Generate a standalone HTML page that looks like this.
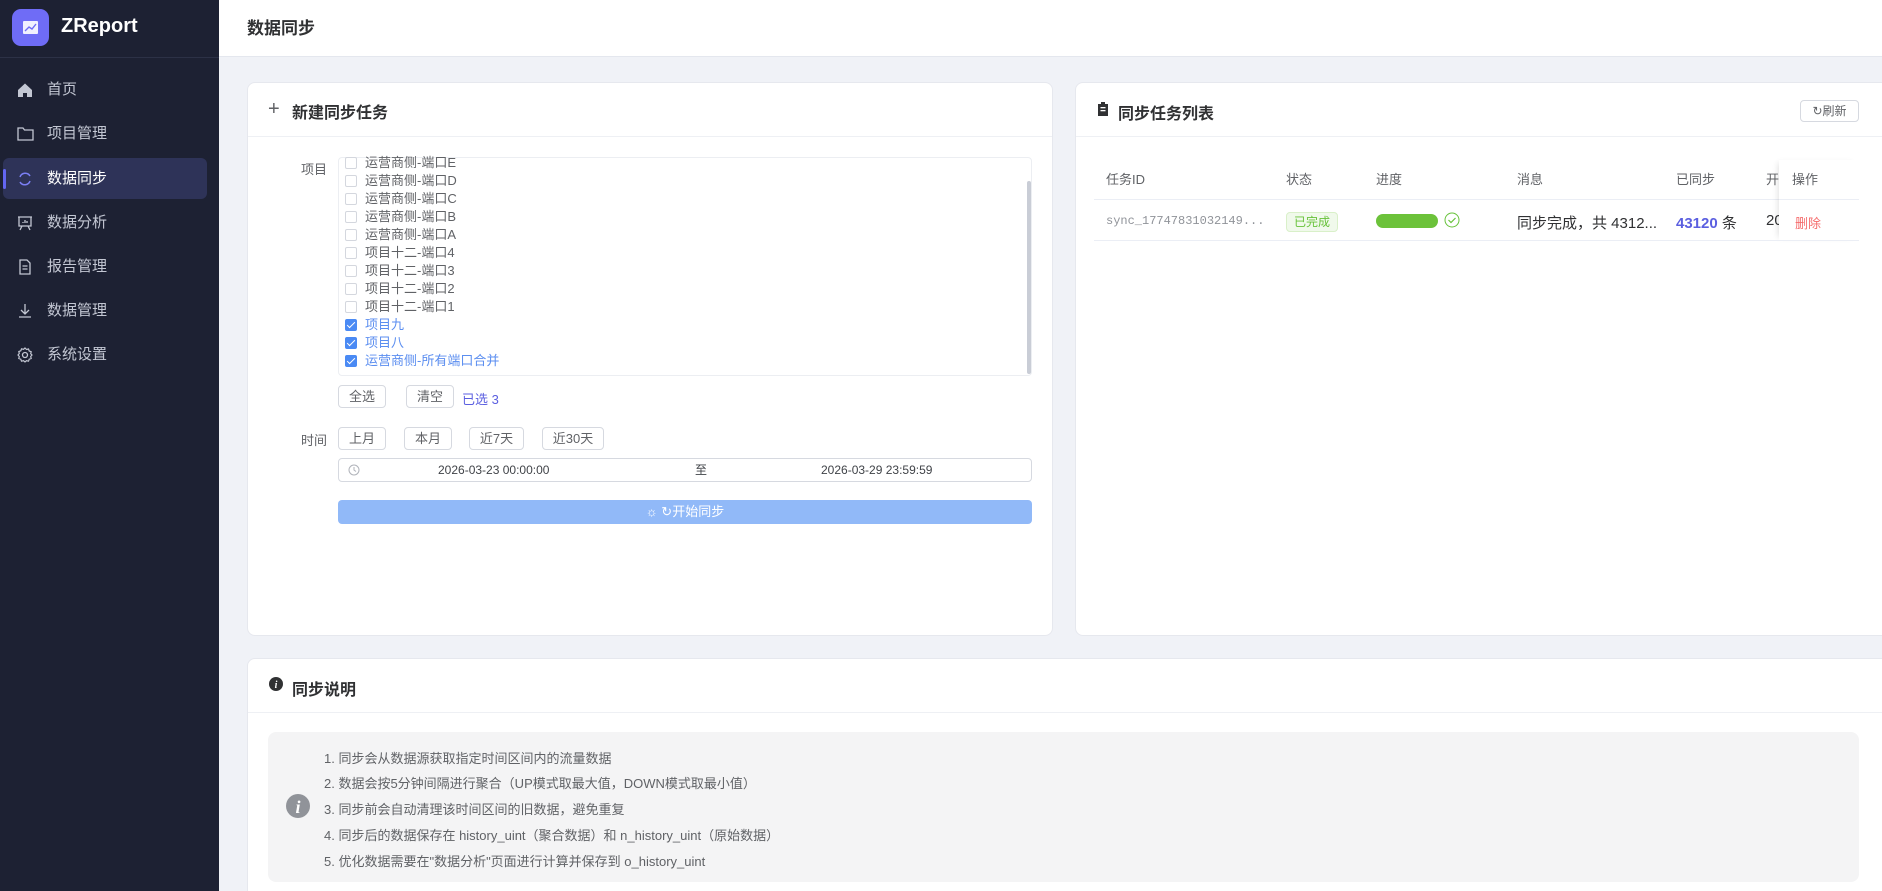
<!DOCTYPE html>
<html><head><meta charset="utf-8">
<style>
*{box-sizing:border-box;margin:0;padding:0}
html{width:1882px;height:891px;overflow:hidden}
body{width:1882px;height:891px;overflow:hidden;background:#f0f2f7;font-family:"Liberation Sans","Noto Sans CJK SC",sans-serif;color:#303133;position:relative}
.abs{position:absolute}
.side{left:0;top:0;width:219px;height:891px;background:#1d2133}
.logo{left:12px;top:9px;width:37px;height:37px;border-radius:9px;background:#6f6cf6}
.brand{left:61px;top:15px;color:#fff;font-weight:bold;font-size:20px}
.sep{left:0;top:57px;width:219px;height:1px;background:#2c3146}
.nav{left:0;width:219px;height:40px;color:#c3c7d3;font-size:15px;line-height:40px}
.nav span.t{position:absolute;left:47px}
.nav svg{position:absolute;left:17px;top:12px}
.active{left:3px;top:158px;width:204px;height:41px;background:#2e3358;border-radius:6px}
.abar{left:3px;top:169px;width:3px;height:20px;background:#6366f1;border-radius:2px}
.header{left:219px;top:0;width:1663px;height:57px;background:#fff;border-bottom:1px solid #e4e7ee}
.card{background:#fff;border:1px solid #e6e8ee;border-radius:8px}
.ch{font-size:16px;font-weight:bold;color:#303133}
.hl{height:1px;background:#eef0f4}
.item{left:345px;font-size:13px;color:#606266;height:18px;line-height:18px}
.item i{display:inline-block;width:12px;height:12px;border:1px solid #d4d7de;border-radius:2px;vertical-align:-2px;margin-right:8px;background:#fff}
.item.on{color:#5b8ef0}
.item.on i{background:#4a8af4;border-color:#4a8af4;position:relative}
.item.on i:after{content:"";position:absolute;left:3px;top:0px;width:3px;height:7px;border:solid #fff;border-width:0 1.5px 1.5px 0;transform:rotate(45deg)}
.btn{border:1px solid #d6d9e0;border-radius:4px;font-size:13px;color:#606266;text-align:center;background:#fff}
.th{top:169px;font-size:13px;color:#606266}
.info{font-size:13px;color:#606266}
</style></head><body>
<div class="abs side"></div>
<div class="abs logo"><svg width="37" height="37" viewBox="0 0 37 37"><rect x="11" y="12" width="15" height="13" rx="1" fill="#fff" opacity=".9"/><path d="M13 22l4-4 3 2 4-5" stroke="#6f6cf6" stroke-width="1.4" fill="none"/></svg></div>
<div class="abs brand">ZReport</div>
<div class="abs sep"></div>
<div class="abs active"></div><div class="abs abar"></div>
<div class="abs nav" style="top:70px"><svg width="16" height="16" viewBox="0 0 16 16"><path d="M1 8L8 1.5 15 8v7H10v-4H6v4H1z" fill="#c3c7d3"/></svg><span class="t">首页</span></div>
<div class="abs nav" style="top:114px"><svg width="17" height="16" viewBox="0 0 17 16"><path d="M1 2h5l1.5 2H16v10H1z" stroke="#c3c7d3" stroke-width="1.3" fill="none"/></svg><span class="t">项目管理</span></div>
<div class="abs nav" style="top:159px;color:#fff"><svg width="16" height="16" viewBox="0 0 16 16"><path d="M3 6a5.5 5.5 0 0 1 10-1M13 10a5.5 5.5 0 0 1-10 1" stroke="#7b7ff5" stroke-width="1.5" fill="none"/></svg><span class="t">数据同步</span></div>
<div class="abs nav" style="top:203px"><svg width="16" height="16" viewBox="0 0 16 16"><path d="M1 2h14M2 2v9h12V2M5 11l-2 4M11 11l2 4M6 8v-1M8 8V5M10 8V6" stroke="#c3c7d3" stroke-width="1.3" fill="none"/></svg><span class="t">数据分析</span></div>
<div class="abs nav" style="top:247px"><svg width="16" height="16" viewBox="0 0 16 16"><path d="M3 1h7l3 3v11H3zM5.5 7h5M5.5 10h5" stroke="#c3c7d3" stroke-width="1.3" fill="none"/></svg><span class="t">报告管理</span></div>
<div class="abs nav" style="top:291px"><svg width="16" height="16" viewBox="0 0 16 16"><path d="M8 1v10M4 7l4 4 4-4M2 14h12" stroke="#c3c7d3" stroke-width="1.3" fill="none"/></svg><span class="t">数据管理</span></div>
<div class="abs nav" style="top:335px"><svg width="16" height="16" viewBox="0 0 16 16"><circle cx="8" cy="8" r="2.5" stroke="#c3c7d3" stroke-width="1.3" fill="none"/><path d="M8 1l1.5 1.5 2-.5.7 2 2 .7-.5 2L15 8l-1.3 1.5.5 2-2 .7-.7 2-2-.5L8 15l-1.5-1.3-2 .5-.7-2-2-.7.5-2L1 8l1.3-1.5-.5-2 2-.7.7-2 2 .5z" stroke="#c3c7d3" stroke-width="1.2" fill="none"/></svg><span class="t">系统设置</span></div>

<div class="abs header"></div>
<div class="abs" style="left:247px;top:14px;font-size:17px;font-weight:bold;color:#303133">数据同步</div>

<!-- left card -->
<div class="abs card" style="left:247px;top:82px;width:806px;height:554px"></div>
<div class="abs" style="left:268px;top:98px;font-size:20px;color:#606266;font-weight:300">+</div>
<div class="abs ch" style="left:292px;top:99px">新建同步任务</div>
<div class="abs hl" style="left:248px;top:136px;width:804px"></div>
<div class="abs" style="left:301px;top:159px;font-size:13px;color:#606266">项目</div>
<div class="abs" style="left:338px;top:157px;width:694px;height:219px;border:1px solid #eceef2;border-radius:4px"></div>
<div class="abs" style="left:1027px;top:181px;width:4px;height:193px;background:#c9cdd6;border-radius:2px"></div>
<div class="abs item" style="top:154px"><i></i>运营商侧-端口E</div>
<div class="abs item" style="top:172px"><i></i>运营商侧-端口D</div>
<div class="abs item" style="top:190px"><i></i>运营商侧-端口C</div>
<div class="abs item" style="top:208px"><i></i>运营商侧-端口B</div>
<div class="abs item" style="top:226px"><i></i>运营商侧-端口A</div>
<div class="abs item" style="top:244px"><i></i>项目十二-端口4</div>
<div class="abs item" style="top:262px"><i></i>项目十二-端口3</div>
<div class="abs item" style="top:280px"><i></i>项目十二-端口2</div>
<div class="abs item" style="top:298px"><i></i>项目十二-端口1</div>
<div class="abs item on" style="top:316px"><i></i>项目九</div>
<div class="abs item on" style="top:334px"><i></i>项目八</div>
<div class="abs item on" style="top:352px"><i></i>运营商侧-所有端口合并</div>
<div class="abs btn" style="left:338px;top:385px;width:48px;height:23px;line-height:21px">全选</div>
<div class="abs btn" style="left:406px;top:385px;width:48px;height:23px;line-height:21px">清空</div>
<div class="abs" style="left:462px;top:389px;font-size:13px;color:#5b5fe0">已选 3</div>
<div class="abs" style="left:301px;top:430px;font-size:13px;color:#606266">时间</div>
<div class="abs btn" style="left:338px;top:427px;width:48px;height:23px;line-height:21px">上月</div>
<div class="abs btn" style="left:404px;top:427px;width:48px;height:23px;line-height:21px">本月</div>
<div class="abs btn" style="left:469px;top:427px;width:55px;height:23px;line-height:21px">近7天</div>
<div class="abs btn" style="left:542px;top:427px;width:62px;height:23px;line-height:21px">近30天</div>
<div class="abs" style="left:338px;top:458px;width:694px;height:24px;border:1px solid #d6d9e0;border-radius:4px"></div>
<svg class="abs" style="left:348px;top:464px" width="12" height="12" viewBox="0 0 12 12"><circle cx="6" cy="6" r="5" stroke="#b0b3ba" fill="none"/><path d="M6 3v3l2 1.5" stroke="#b0b3ba" fill="none"/></svg>
<div class="abs" style="left:438px;top:463px;font-size:12px;color:#404348">2026-03-23 00:00:00</div>
<div class="abs" style="left:695px;top:461px;font-size:12px;color:#404348">至</div>
<div class="abs" style="left:821px;top:463px;font-size:12px;color:#404348">2026-03-29 23:59:59</div>
<div class="abs" style="left:338px;top:500px;width:694px;height:24px;background:#91b9f8;border-radius:4px;color:#fff;font-size:13px;text-align:center;line-height:24px">☼ ↻开始同步</div>

<!-- right card -->
<div class="abs card" style="left:1075px;top:82px;width:820px;height:554px"></div>
<svg class="abs" style="left:1097px;top:102px" width="12" height="14" viewBox="0 0 12 14"><path d="M1 2h10v12H1z" fill="#303133"/><rect x="3.5" y="5" width="5" height="1.3" fill="#fff"/><rect x="3.5" y="8" width="5" height="1.3" fill="#fff"/><rect x="4" y="0" width="4" height="3" fill="#303133"/></svg>
<div class="abs ch" style="left:1118px;top:100px">同步任务列表</div>
<div class="abs btn" style="left:1800px;top:100px;width:59px;height:22px;line-height:20px;font-size:12px">↻刷新</div>
<div class="abs hl" style="left:1076px;top:136px;width:806px"></div>
<div class="abs th" style="left:1106px">任务ID</div>
<div class="abs th" style="left:1286px">状态</div>
<div class="abs th" style="left:1376px">进度</div>
<div class="abs th" style="left:1517px">消息</div>
<div class="abs th" style="left:1676px">已同步</div>
<div class="abs th" style="left:1766px">开</div>
<div class="abs hl" style="left:1094px;top:199px;width:765px;background:#ebeef5"></div>
<div class="abs" style="left:1106px;top:214px;font-size:12px;color:#909399;font-family:'Liberation Mono',monospace">sync_17747831032149...</div>
<div class="abs" style="left:1286px;top:212px;width:52px;height:20px;background:#f0f9eb;border:1px solid #d9f0c9;border-radius:4px;font-size:12px;color:#67c23a;text-align:center;line-height:18px">已完成</div>
<div class="abs" style="left:1376px;top:214px;width:62px;height:14px;background:#6cc23a;border-radius:7px"></div>
<svg class="abs" style="left:1444px;top:212px" width="16" height="16" viewBox="0 0 16 16"><circle cx="8" cy="8" r="7" stroke="#67c23a" fill="none"/><path d="M4.5 8l2.5 2.5 4.5-4.5" stroke="#67c23a" fill="none" stroke-width="1.2"/></svg>
<div class="abs" style="left:1517px;top:212px;font-size:15px;color:#303133">同步完成，共 4312...</div>
<div class="abs" style="left:1676px;top:212px;font-size:15px;color:#303133"><span style="color:#5b5fe0;font-weight:bold">43120</span> 条</div>
<div class="abs" style="left:1766px;top:212px;font-size:15px;color:#303133">20</div>
<div class="abs" style="left:1779px;top:160px;width:80px;height:80px;background:#fff;box-shadow:-4px 0 6px -3px rgba(0,0,0,.12)"></div>
<div class="abs th" style="left:1792px">操作</div>
<div class="abs" style="left:1795px;top:213px;font-size:13px;color:#f56c6c">删除</div>
<div class="abs hl" style="left:1094px;top:240px;width:765px;background:#ebeef5"></div>
<div class="abs hl" style="left:1779px;top:199px;width:80px;background:#ebeef5"></div>

<!-- bottom card -->
<div class="abs card" style="left:247px;top:658px;width:1648px;height:240px"></div>
<svg class="abs" style="left:269px;top:677px" width="14" height="14" viewBox="0 0 14 14"><circle cx="7" cy="7" r="7" fill="#303133"/><text x="7" y="11" font-size="10" font-style="italic" font-weight="bold" fill="#fff" text-anchor="middle" font-family="Liberation Serif">i</text></svg>
<div class="abs ch" style="left:292px;top:676px">同步说明</div>
<div class="abs hl" style="left:248px;top:712px;width:1634px"></div>
<div class="abs" style="left:268px;top:732px;width:1591px;height:150px;background:#f4f4f5;border-radius:8px"></div>
<svg class="abs" style="left:286px;top:794px" width="24" height="24" viewBox="0 0 24 24"><circle cx="12" cy="12" r="12" fill="#909399"/><text x="12" y="19" font-size="18" font-style="italic" font-weight="bold" fill="#fff" text-anchor="middle" font-family="Liberation Serif">i</text></svg>
<div class="abs info" style="left:324px;top:748px">1. 同步会从数据源获取指定时间区间内的流量数据</div>
<div class="abs info" style="left:324px;top:773px">2. 数据会按5分钟间隔进行聚合（UP模式取最大值，DOWN模式取最小值）</div>
<div class="abs info" style="left:324px;top:799px">3. 同步前会自动清理该时间区间的旧数据，避免重复</div>
<div class="abs info" style="left:324px;top:825px">4. 同步后的数据保存在 history_uint（聚合数据）和 n_history_uint（原始数据）</div>
<div class="abs info" style="left:324px;top:851px">5. 优化数据需要在"数据分析"页面进行计算并保存到 o_history_uint</div>
</body></html>
